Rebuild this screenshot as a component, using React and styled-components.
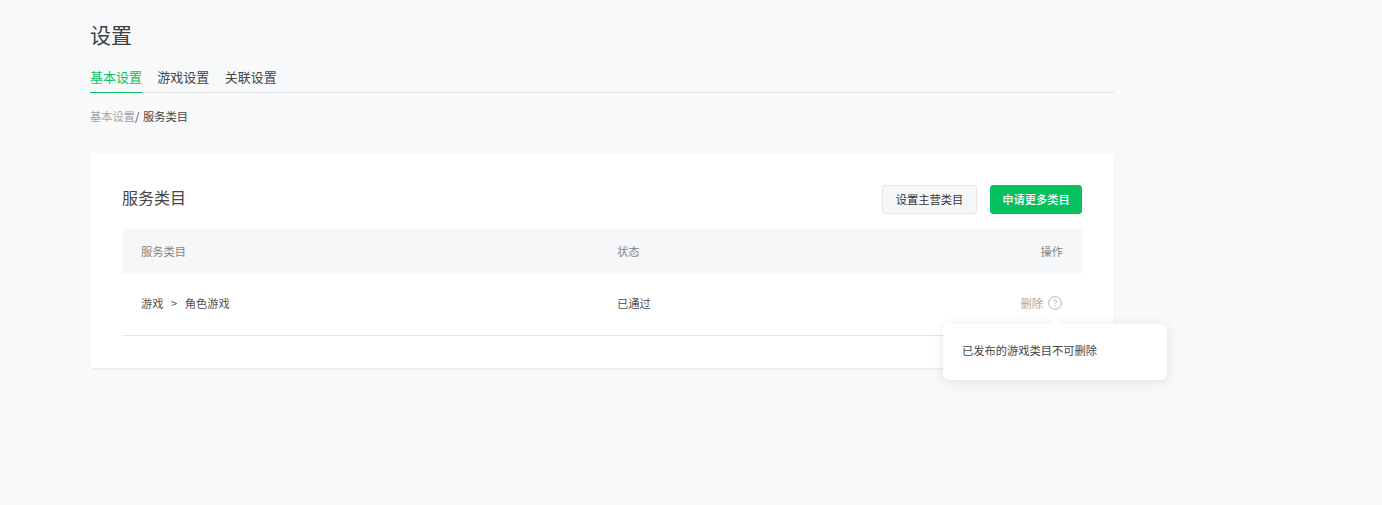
import React from "react";
import styled, { createGlobalStyle } from "styled-components";

const Global = createGlobalStyle`
  html, body { margin: 0; padding: 0; background: #f8f9fb; }
  body { font-family: "Noto Sans CJK SC", "Noto Sans", sans-serif; color: #353535; }
`;
const Page = styled.div`
  width: 1024px;
  height: 505px;
  margin-left: 90px;
  padding-top: 19px;
  box-sizing: border-box;
`;
const Title = styled.h1`
  margin: 0;
  height: 30px;
  font-size: 21px;
  line-height: 30px;
  font-weight: 400;
  color: #404040;
`;
const Tabs = styled.nav`
  display: flex;
  gap: 15.3px;
  margin-top: 17px;
  height: 26px;
  border-bottom: 1px solid #e0e2e4;
`;
const Tab = styled.a`
  height: 26px;
  font-size: 13px;
  line-height: 21px;
  color: ${(p) => (p.$active ? "#07c160" : "#454545")};
  border-bottom: 1px solid ${(p) => (p.$active ? "#07c160" : "transparent")};
`;
const Crumbs = styled.div`
  display: flex;
  margin-top: 15px;
  height: 17px;
  font-size: 11.25px;
  line-height: 16px;
  color: #454545;
`;
const CrumbLink = styled.span`
  color: #a3a3a3;
`;
const CrumbSep = styled.span`
  width: 8px;
`;
const Card = styled.section`
  margin-top: 28px;
  padding: 32px;
  background: #fff;
  border-radius: 4px;
  box-shadow: 0 1px 2px rgba(0, 0, 0, 0.08);
`;
const CardHead = styled.header`
  display: flex;
  align-items: center;
  justify-content: space-between;
  height: 29px;
  margin-bottom: 15px;
`;
const CardTitle = styled.h2`
  margin: -6px 0 0;
  font-size: 16px;
  line-height: 24px;
  font-weight: 400;
  color: #454545;
`;
const Actions = styled.div`
  display: flex;
  gap: 13px;
`;
const Button = styled.button`
  height: 29px;
  width: ${(p) => (p.$primary ? "92px" : "95px")};
  padding: 0;
  box-sizing: border-box;
  font-family: inherit;
  font-size: 11.25px;
  line-height: 1;
  border-radius: 3px;
  border: 1px solid ${(p) => (p.$primary ? "#07c160" : "#e4e6e8")};
  background: ${(p) => (p.$primary ? "#07c160" : "#f6f7f9")};
  color: ${(p) => (p.$primary ? "#fff" : "#353535")};
  font-weight: ${(p) => (p.$primary ? 500 : 400)};
`;
const Row = styled.div`
  display: grid;
  grid-template-columns: 476px 1fr auto;
  align-items: center;
  padding: 0 19px ${(p) => (p.$head ? "2px" : "4px")};
  box-sizing: border-box;
  font-size: 11.25px;
  height: ${(p) => (p.$head ? "45px" : "62px")};
  background: ${(p) => (p.$head ? "#f6f7f9" : "transparent")};
  color: ${(p) => (p.$head ? "#858585" : "#454545")};
  border-bottom: ${(p) => (p.$head ? "none" : "1px solid #e4e6e8")};
`;
const Path = styled.span`
  display: flex;
  gap: 7.5px;
`;
const Cell = styled.span`
  color: #505050;
`;
const Op = styled.div`
  position: relative;
  display: flex;
  align-items: center;
  gap: 5px;
  margin-right: 1px;
  color: #a8a8a8;
`;
const Help = styled.svg`
  display: block;
  width: 14px;
  height: 14px;
`;
const Tooltip = styled.div`
  position: absolute;
  top: 29px;
  left: -77px;
  width: 224px;
  height: 56px;
  box-sizing: border-box;
  padding: 0 18.5px 3px;
  display: flex;
  align-items: center;
  background: #fff;
  border-radius: 6px;
  box-shadow: 0 2px 12px rgba(0, 0, 0, 0.1);
  color: #454545;
  font-size: 11.25px;
  white-space: nowrap;
  &::before {
    content: "";
    position: absolute;
    top: -4px;
    left: 108px;
    width: 8px;
    height: 8px;
    background: #fff;
    transform: rotate(45deg);
  }
`;

export default function App() {
  return (
    <Page>
      <Global />
      <Title>设置</Title>
      <Tabs>
        <Tab $active>基本设置</Tab>
        <Tab>游戏设置</Tab>
        <Tab>关联设置</Tab>
      </Tabs>
      <Crumbs>
        <CrumbLink>基本设置</CrumbLink>
        <CrumbSep>/</CrumbSep>
        <span>服务类目</span>
      </Crumbs>
      <Card>
        <CardHead>
          <CardTitle>服务类目</CardTitle>
          <Actions>
            <Button>设置主营类目</Button>
            <Button $primary>申请更多类目</Button>
          </Actions>
        </CardHead>
        <Row $head>
          <span>服务类目</span>
          <span>状态</span>
          <span>操作</span>
        </Row>
        <Row>
          <Path>
            <Cell>游戏</Cell>
            <Cell>&gt;</Cell>
            <Cell>角色游戏</Cell>
          </Path>
          <Cell>已通过</Cell>
          <Op>
            删除
            <Help viewBox="0 0 14 14" fill="none">
              <circle cx="7" cy="7" r="6.3" stroke="#b5b5b5" strokeWidth="1" />
              <path d="M5.4 5.6a1.6 1.6 0 1 1 2.5 1.3c-.6.4-.9.7-.9 1.4" stroke="#b5b5b5" strokeWidth="1" />
              <circle cx="7" cy="10.2" r=".6" fill="#b5b5b5" />
            </Help>
            <Tooltip>已发布的游戏类目不可删除</Tooltip>
          </Op>
        </Row>
      </Card>
    </Page>
  );
}
